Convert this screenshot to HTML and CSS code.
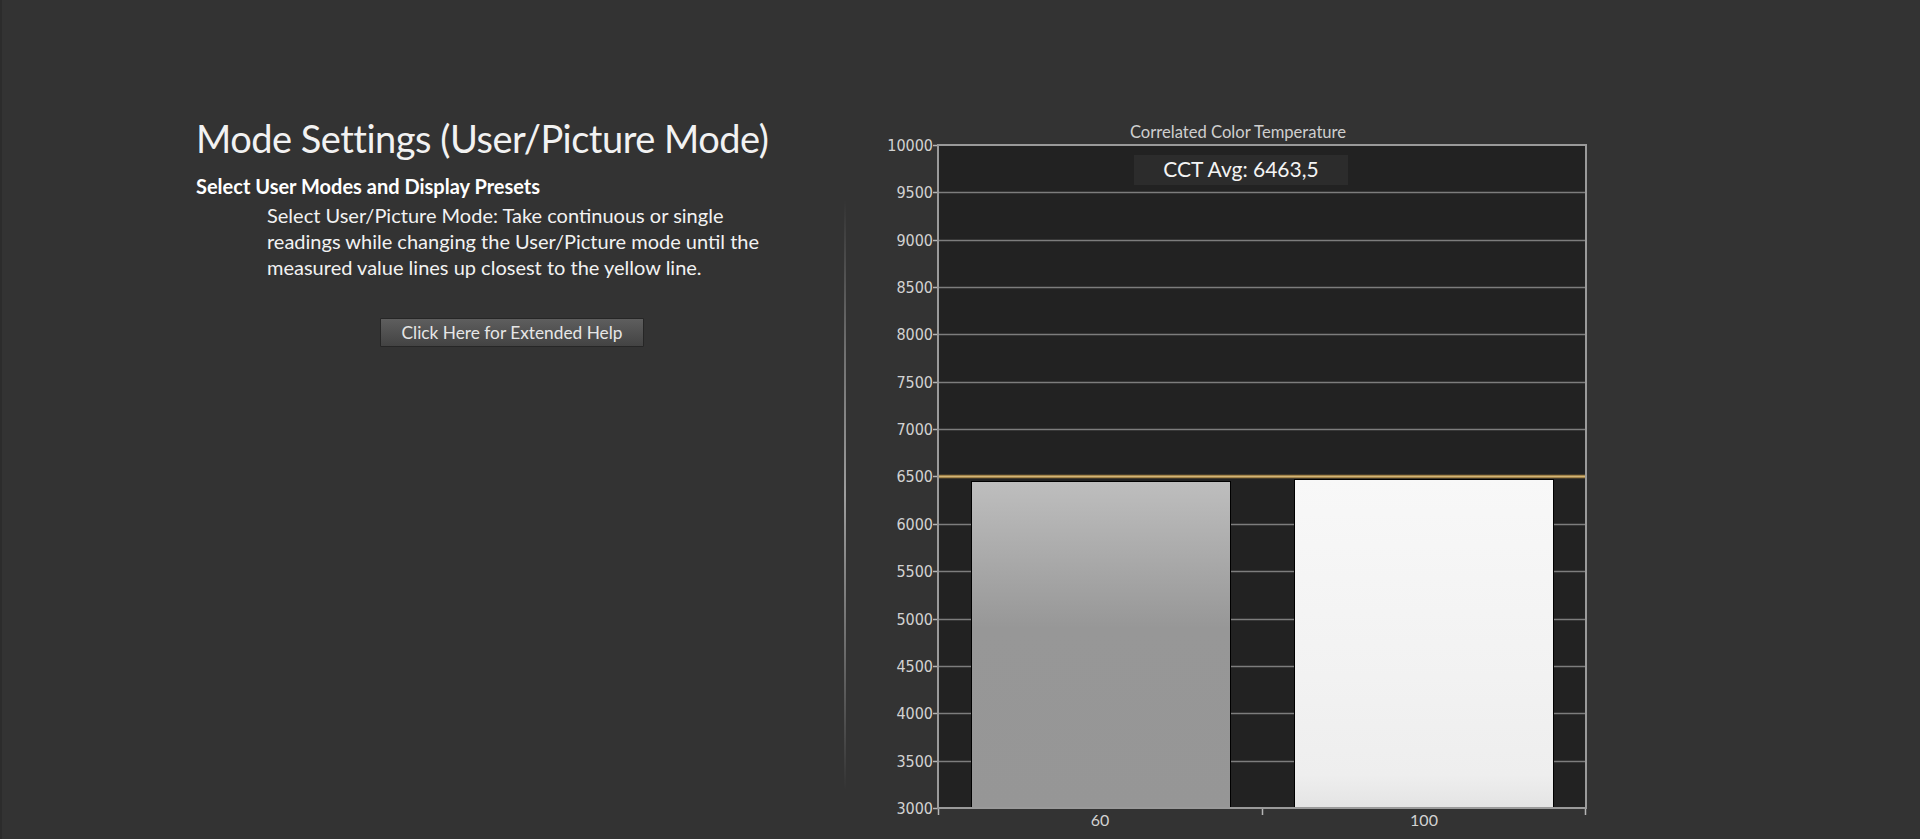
FILE: index.html
```html
<!DOCTYPE html>
<html lang="en">
<head>
<meta charset="utf-8">
<title>Mode Settings</title>
<link rel="stylesheet" href="styles.css">
</head>
<body>
<div class="page">
  <section class="info">
    <h1 class="title">Mode Settings (User/Picture Mode)</h1>
    <h2 class="subtitle">Select User Modes and Display Presets</h2>
    <p class="desc">Select User/Picture Mode: Take continuous or single<br>readings while changing the User/Picture mode until the<br>measured value lines up closest to the yellow line.</p>
    <div class="btn-row"><button class="help-btn" type="button">Click Here for Extended Help</button></div>
  </section>
  <div class="divider"></div>
  <section class="chart">
    <svg class="chart-svg" width="720" height="719" viewBox="880 120 720 719" xmlns="http://www.w3.org/2000/svg">
      <defs>
        <linearGradient id="bar1" x1="0" y1="0" x2="0" y2="1">
          <stop offset="0" stop-color="#bebebe"/>
          <stop offset="0.45" stop-color="#979797"/>
          <stop offset="1" stop-color="#969696"/>
        </linearGradient>
        <linearGradient id="bar2" x1="0" y1="0" x2="0" y2="1">
          <stop offset="0" stop-color="#f8f8f8"/>
          <stop offset="0.6" stop-color="#f2f2f2"/>
          <stop offset="0.9" stop-color="#eeeeee"/>
          <stop offset="1" stop-color="#e4e4e4"/>
        </linearGradient>
      </defs>
      <text class="chart-title" x="1238" y="138" text-anchor="middle">Correlated Color Temperature</text>
      <rect class="plot-bg" x="938" y="145" width="648" height="663"/>
      <g class="grid">
        <line x1="938" x2="1586" y1="192.5" y2="192.5"/>
        <line x1="938" x2="1586" y1="240.5" y2="240.5"/>
        <line x1="938" x2="1586" y1="287.5" y2="287.5"/>
        <line x1="938" x2="1586" y1="334.5" y2="334.5"/>
        <line x1="938" x2="1586" y1="382.5" y2="382.5"/>
        <line x1="938" x2="1586" y1="429.5" y2="429.5"/>
        <line x1="938" x2="1586" y1="524.5" y2="524.5"/>
        <line x1="938" x2="1586" y1="571.5" y2="571.5"/>
        <line x1="938" x2="1586" y1="619.5" y2="619.5"/>
        <line x1="938" x2="1586" y1="666.5" y2="666.5"/>
        <line x1="938" x2="1586" y1="713.5" y2="713.5"/>
        <line x1="938" x2="1586" y1="761.5" y2="761.5"/>
      </g>
      <g class="ticks">
        <line x1="933" x2="938" y1="145.5" y2="145.5"/>
        <line x1="933" x2="938" y1="192.5" y2="192.5"/>
        <line x1="933" x2="938" y1="240.5" y2="240.5"/>
        <line x1="933" x2="938" y1="287.5" y2="287.5"/>
        <line x1="933" x2="938" y1="334.5" y2="334.5"/>
        <line x1="933" x2="938" y1="382.5" y2="382.5"/>
        <line x1="933" x2="938" y1="429.5" y2="429.5"/>
        <line x1="933" x2="938" y1="476.5" y2="476.5"/>
        <line x1="933" x2="938" y1="524.5" y2="524.5"/>
        <line x1="933" x2="938" y1="571.5" y2="571.5"/>
        <line x1="933" x2="938" y1="619.5" y2="619.5"/>
        <line x1="933" x2="938" y1="666.5" y2="666.5"/>
        <line x1="933" x2="938" y1="713.5" y2="713.5"/>
        <line x1="933" x2="938" y1="761.5" y2="761.5"/>
        <line x1="933" x2="938" y1="808.5" y2="808.5"/>
        <line x1="1262.5" x2="1262.5" y1="808" y2="815"/>
        <line x1="1585.5" x2="1585.5" y1="808" y2="815"/>
        <line x1="938.5" x2="938.5" y1="808" y2="815"/>
      </g>
      <g class="ylabels">
        <text x="933" y="151">10000</text>
        <text x="933" y="198">9500</text>
        <text x="933" y="246">9000</text>
        <text x="933" y="293">8500</text>
        <text x="933" y="340">8000</text>
        <text x="933" y="388">7500</text>
        <text x="933" y="435">7000</text>
        <text x="933" y="482">6500</text>
        <text x="933" y="530">6000</text>
        <text x="933" y="577">5500</text>
        <text x="933" y="625">5000</text>
        <text x="933" y="672">4500</text>
        <text x="933" y="719">4000</text>
        <text x="933" y="767">3500</text>
        <text x="933" y="814">3000</text>
      </g>
      <rect class="bar" x="971.5" y="481.5" width="259" height="326.5" fill="url(#bar1)"/>
      <rect class="bar" x="1294.5" y="479.5" width="259" height="328.5" fill="url(#bar2)"/>
      <line class="target-outer" x1="938" x2="1586" y1="476.5" y2="476.5"/>
      <line class="target-inner" x1="938" x2="1586" y1="476.5" y2="476.5"/>
      <g class="frame">
        <line x1="938" x2="1586" y1="145" y2="145"/>
        <line x1="938" x2="938" y1="144" y2="809"/>
        <line x1="1586" x2="1586" y1="144" y2="809"/>
        <line x1="938" x2="1586" y1="808" y2="808"/>
      </g>
      <rect class="avg-box" x="1134" y="155" width="214" height="30"/>
      <text class="avg-text" x="1241" y="177" text-anchor="middle">CCT Avg: 6463,5</text>
      <text class="xlabel" x="1100" y="826" text-anchor="middle">60</text>
      <text class="xlabel" x="1424" y="826" text-anchor="middle">100</text>
    </svg>
  </section>
</div>
</body>
</html>
```
FILE: styles.css
```css
html, body {
  margin: 0;
  padding: 0;
  background: #333333;
}

body {
  font-family: Lato, "Open Sans", "Liberation Sans", sans-serif;
  color: #f2f2f2;
  overflow: hidden;
}

.page {
  display: flex;
  height: 839px;
  width: 1920px;
  background: #333333;
  border-left: 2px solid #2c2c2c;
  box-sizing: border-box;
}

.info {
  width: 842px;
  box-sizing: border-box;
  padding-top: 114px;
  padding-left: 194px;
  flex-shrink: 0;
}

.title {
  margin: 0;
  font-size: 38px;
  letter-spacing: -0.5px;
  line-height: 48px;
  font-weight: 400;
  color: #f2f2f2;
  white-space: nowrap;
}

.subtitle {
  margin: 11px 0 0 0;
  font-size: 20px;
  line-height: 26px;
  font-weight: 700;
  color: #ffffff;
  white-space: nowrap;
}

.desc {
  margin: 3px 0 0 0;
  padding-left: 71px;
  font-size: 20px;
  line-height: 26px;
  color: #f2f2f2;
  white-space: nowrap;
}

.btn-row {
  display: flex;
  justify-content: center;
  width: 632px;
  margin-top: 38px;
}

.help-btn {
  width: 264px;
  height: 29px;
  padding: 0;
  font-family: Lato, "Open Sans", "Liberation Sans", sans-serif;
  font-size: 17.3px;
  color: #e6e6e6;
  background: linear-gradient(#5e5e5e, #434343);
  border: 1px solid #262626;
  border-radius: 1px;
}

.divider {
  width: 2px;
  height: 590px;
  margin-top: 200px;
  flex-shrink: 0;
  background: linear-gradient(to bottom, rgba(150,150,150,0), rgba(160,160,160,0.55) 25%, #9e9e9e 50%, rgba(160,160,160,0.55) 75%, rgba(150,150,150,0));
}

.chart {
  margin-left: 34px;
  padding-top: 120px;
  flex-shrink: 0;
}

.chart-svg {
  display: block;
}

.chart-title {
  font-family: Lato, "Open Sans", sans-serif;
  font-size: 16.6px;
  fill: #cfcfcf;
}

.plot-bg {
  fill: #222222;
}

.grid line {
  stroke: #7d7d7d;
  stroke-width: 1.5;
}

.ticks line {
  stroke: #b5b5b5;
  stroke-width: 1.5;
}

.ylabels text {
  font-family: "DejaVu Sans Condensed", "DejaVu Sans", sans-serif;
  font-size: 16px;
  fill: #d2d2d2;
  text-anchor: end;
}

.bar {
  stroke: #000000;
  stroke-width: 1;
}

.target-outer {
  stroke: #a2834a;
  stroke-width: 3.5;
}

.target-inner {
  stroke: #d2b577;
  stroke-width: 1;
}

.frame line {
  stroke: #9a9a9a;
  stroke-width: 2;
}

.avg-box {
  fill: #2c2c2c;
}

.avg-text {
  font-family: Lato, "Open Sans", sans-serif;
  font-size: 21px;
  fill: #f4f4f4;
}

.xlabel {
  font-family: Lato, "Open Sans", sans-serif;
  font-size: 16px;
  fill: #d2d2d2;
}
```
